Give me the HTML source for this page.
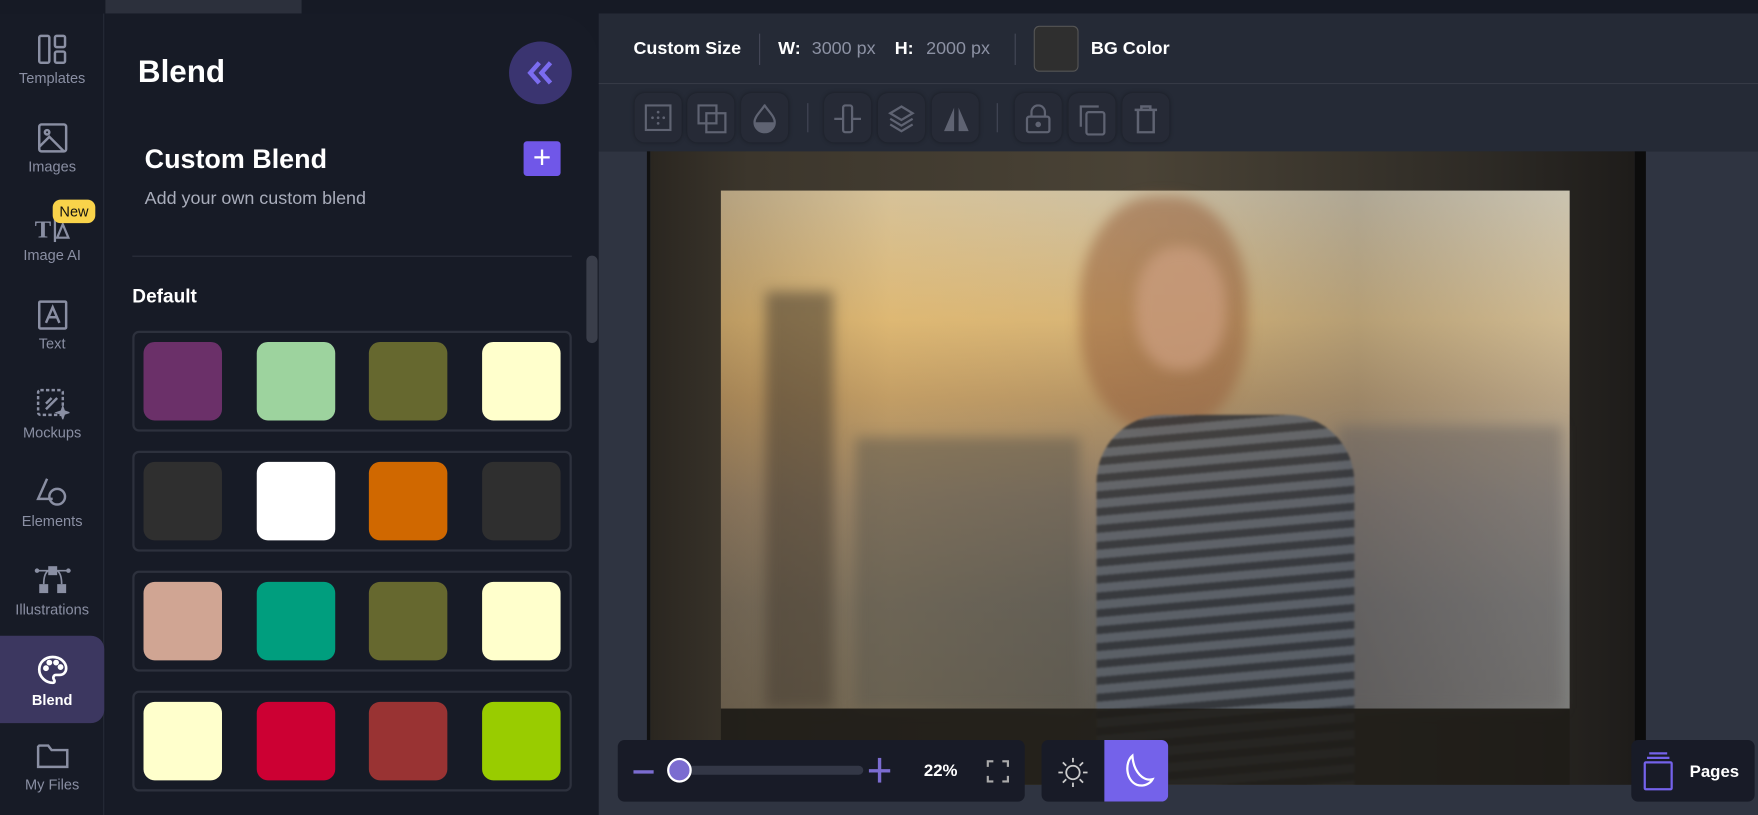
<!DOCTYPE html>
<html><head><meta charset="utf-8"><style>
*{box-sizing:border-box;margin:0;padding:0}
html,body{width:1758px;height:815px;overflow:hidden;background:#161a25;font-family:"Liberation Sans",sans-serif}
#w{width:1568px;height:727px;transform:scale(1.12117);transform-origin:0 0;position:relative;background:#161a25}
.a{position:absolute}
.side{left:0;top:12px;width:93px;height:715px;background:#171b26;border-right:1px solid #262a36}
.it{position:absolute;left:0;width:93px;text-align:center;color:#8a8fa3;font-size:13px}
.it svg{display:block;margin:0 auto 4px}
.panel{left:94px;top:12px;width:440px;height:715px;background:#171b26;border-top-right-radius:42px}
.sw{position:absolute;width:70px;height:70px;border-radius:10px}
.grp{position:absolute;left:118px;width:392px;height:90px;border:2px solid #2d313d;border-radius:6px}
.tb{position:absolute;top:83px;width:42px;height:44px;border-radius:9px;background:#262a36;box-shadow:0 0 4px rgba(0,0,0,.35)}
.tb svg{position:absolute;left:9px;top:10px}
.bl{filter:blur(6px)}
</style></head><body><div id="w">
<div class="a" style="left:94px;top:0;width:175px;height:12px;background:#2c303c"></div>
<div class="a side">
 <div class="it" style="top:18px"><svg width="28" height="28" viewBox="0 0 28 28" fill="none" stroke="#8a8fa3" stroke-width="2.2"><rect x="2" y="2" width="9" height="24" rx="1.5"/><rect x="16" y="2" width="9" height="10" rx="1.5"/><rect x="16" y="16" width="9" height="10" rx="1.5"/></svg>Templates</div>
 <div class="it" style="top:97px"><svg width="28" height="28" viewBox="0 0 28 28" fill="none" stroke="#8a8fa3" stroke-width="2.2"><rect x="2" y="2" width="24" height="24" rx="2"/><circle cx="9" cy="9" r="2"/><path d="M2 22l9-9 13 13"/></svg>Images</div>
 <div class="it" style="top:176px"><svg width="34" height="28" viewBox="0 0 34 28"><text x="1" y="24" font-family="Liberation Serif" font-weight="bold" font-size="22" fill="#8a8fa3">T</text><path d="M19 6v22M21 24l5-12 5 12z" stroke="#8a8fa3" stroke-width="2" fill="none"/></svg>Image AI</div>
 <div class="a" style="left:47px;top:166px;background:#f9d34a;color:#111;font-size:13px;padding:3px 6px;border-radius:7px">New</div>
 <div class="it" style="top:255px"><svg width="28" height="28" viewBox="0 0 28 28" fill="none" stroke="#8a8fa3" stroke-width="2.2"><rect x="2" y="2" width="24" height="24" rx="1"/><path d="M8 21l6-14 6 14M10 16h8"/></svg>Text</div>
 <div class="it" style="top:334px"><svg width="30" height="28" viewBox="0 0 30 28" fill="none" stroke="#8a8fa3" stroke-width="2.2"><rect x="2" y="2" width="22" height="22" rx="2" stroke-dasharray="3 2"/><path d="M9 14l5-5M9 19l10-10" /><path d="M24 18l1 3 3 1-3 1-1 3-1-3-3-1 3-1z" fill="#8a8fa3"/></svg>Mockups</div>
 <div class="it" style="top:413px"><svg width="30" height="28" viewBox="0 0 30 28" fill="none" stroke="#8a8fa3" stroke-width="2.2"><path d="M10 2L2 20h13"/><circle cx="19" cy="18" r="7"/></svg>Elements</div>
 <div class="it" style="top:492px"><svg width="34" height="28" viewBox="0 0 34 28" fill="#8a8fa3"><rect x="13" y="1" width="8" height="8"/><rect x="5" y="17" width="8" height="8"/><rect x="21" y="17" width="8" height="8"/><circle cx="3" cy="5" r="2"/><circle cx="31" cy="5" r="2"/><path d="M3 5h30M13 5c-3 2-4 6-4 12M21 5c3 2 4 6 4 12" stroke="#8a8fa3" stroke-width="1.5" fill="none"/></svg>Illustrations</div>
 <div class="a" style="left:0;top:555px;width:93px;height:78px;background:#3c3760;border-radius:0 12px 12px 0"></div>
 <div class="it" style="top:571px;color:#fff;font-weight:bold"><svg width="30" height="30" viewBox="0 0 30 30" fill="none" stroke="#fff" stroke-width="2.4"><path d="M15 3C8 3 3 8 3 14c0 7 6 12 12 12 2 0 2-2 1-3-1-2 0-4 2-4h3c4 0 6-3 6-6 0-5-5-10-12-10z"/><circle cx="9" cy="13" r="1.4" fill="#fff"/><circle cx="12" cy="8" r="1.4" fill="#fff"/><circle cx="18" cy="8" r="1.4" fill="#fff"/><circle cx="22" cy="12" r="1.4" fill="#fff"/></svg>Blend</div>
 <div class="it" style="top:650px"><svg width="30" height="26" viewBox="0 0 30 26" fill="none" stroke="#8a8fa3" stroke-width="2.2"><path d="M2 4v18h26V7H14l-3-4H3z"/></svg>My Files</div>
</div>
<div class="a panel"></div>
<div class="a" style="left:123px;top:48px;color:#fff;font-size:28px;font-weight:bold">Blend</div>
<div class="a" style="left:454px;top:37px;width:56px;height:56px;border-radius:50%;background:#3a3470"></div>
<svg class="a" style="left:469px;top:53px" width="26" height="24" viewBox="0 0 26 24" fill="none" stroke="#7b6cf0" stroke-width="4"><path d="M12 3L4 12l8 9M22 3l-8 9 8 9"/></svg>
<div class="a" style="left:129px;top:129px;color:#fff;font-size:24px;font-weight:bold">Custom Blend</div>
<div class="a" style="left:467px;top:126px;width:33px;height:31px;border-radius:3px;background:#7057e8;color:#fff;font-size:28px;line-height:29px;text-align:center">+</div>
<div class="a" style="left:129px;top:169px;color:#a9adbb;font-size:16px">Add your own custom blend</div>
<div class="a" style="left:118px;top:228px;width:392px;height:1px;background:#2d313d"></div>
<div class="a" style="left:118px;top:255px;color:#fff;font-size:17px;font-weight:bold">Default</div>
<div class="a" style="left:523px;top:228px;width:10px;height:78px;border-radius:5px;background:#3a3e4a"></div>
<div class="grp" style="top:295px"></div><div class="grp" style="top:402px"></div><div class="grp" style="top:509px"></div><div class="grp" style="top:616px"></div>
<div class="sw" style="left:128px;top:305px;background:#6b3069"></div><div class="sw" style="left:229px;top:305px;background:#9dd39e"></div><div class="sw" style="left:329px;top:305px;background:#66682f"></div><div class="sw" style="left:430px;top:305px;background:#ffffcc"></div>
<div class="sw" style="left:128px;top:412px;background:#2f2f2f"></div><div class="sw" style="left:229px;top:412px;background:#fff"></div><div class="sw" style="left:329px;top:412px;background:#d06800"></div><div class="sw" style="left:430px;top:412px;background:#2f2f2f"></div>
<div class="sw" style="left:128px;top:519px;background:#d0a593"></div><div class="sw" style="left:229px;top:519px;background:#009e7e"></div><div class="sw" style="left:329px;top:519px;background:#66682f"></div><div class="sw" style="left:430px;top:519px;background:#ffffcc"></div>
<div class="sw" style="left:128px;top:626px;background:#ffffcc"></div><div class="sw" style="left:229px;top:626px;background:#cc0033"></div><div class="sw" style="left:329px;top:626px;background:#993333"></div><div class="sw" style="left:430px;top:626px;background:#99cc00"></div>
<!-- right -->
<div class="a" style="left:534px;top:12px;width:1034px;height:123px;background:#252a36"></div>
<div class="a" style="left:534px;top:74px;width:1034px;height:1px;background:#363a46"></div>
<div class="a" style="left:565px;top:35px;color:#fff;font-size:16px;font-weight:bold">Custom Size</div>
<div class="a" style="left:677px;top:30px;width:1px;height:28px;background:#444857"></div>
<div class="a" style="left:694px;top:35px;color:#fff;font-size:16px;font-weight:bold">W:</div>
<div class="a" style="left:724px;top:35px;color:#8c91a3;font-size:16px">3000 px</div>
<div class="a" style="left:798px;top:35px;color:#fff;font-size:16px;font-weight:bold">H:</div>
<div class="a" style="left:826px;top:35px;color:#8c91a3;font-size:16px">2000 px</div>
<div class="a" style="left:905px;top:30px;width:1px;height:28px;background:#444857"></div>
<div class="a" style="left:922px;top:23px;width:40px;height:41px;border-radius:5px;background:#2f2f2f;border:1px solid #555"></div>
<div class="a" style="left:973px;top:35px;color:#fff;font-size:16px;font-weight:bold">BG Color</div>
<div class="tb" style="left:566px"><svg width="24" height="24" viewBox="0 0 24 24" fill="none" stroke="#5f6372" stroke-width="2"><rect x="1" y="1" width="22" height="22"/><g fill="#5f6372" stroke="none"><circle cx="12" cy="7" r="1.2"/><circle cx="7" cy="12" r="1.2"/><circle cx="12" cy="12" r="1.2"/><circle cx="17" cy="12" r="1.2"/><circle cx="12" cy="17" r="1.2"/></g></svg></div>
<div class="tb" style="left:613px"><svg width="26" height="26" viewBox="0 0 26 26" fill="none" stroke="#5f6372" stroke-width="2"><rect x="1" y="1" width="16" height="16"/><rect x="8" y="8" width="17" height="17"/></svg></div>
<div class="tb" style="left:661px"><svg width="24" height="26" viewBox="0 0 24 26" fill="#5f6372"><path d="M12 1C8 7 3 11 3 16a9 9 0 0018 0c0-5-5-9-9-15z" fill="none" stroke="#5f6372" stroke-width="2"/><path d="M3 16h18a9 9 0 01-18 0z"/></svg></div>
<div class="a" style="left:720px;top:92px;width:1px;height:26px;background:#444857"></div>
<div class="tb" style="left:735px"><svg width="24" height="26" viewBox="0 0 24 26" fill="none" stroke="#5f6372" stroke-width="2"><rect x="8" y="1" width="8" height="24" rx="2"/><path d="M0 13h8M16 13h8"/></svg></div>
<div class="tb" style="left:783px"><svg width="24" height="26" viewBox="0 0 24 26" fill="none" stroke="#5f6372" stroke-width="2"><path d="M12 2l10 6-10 6-10-6z"/><path d="M2 13l10 6 10-6M2 18l10 6 10-6"/></svg></div>
<div class="tb" style="left:831px"><svg width="26" height="26" viewBox="0 0 26 26" fill="#5f6372"><path d="M11 3L2 24h9zM15 3l9 21h-9z"/></svg></div>
<div class="a" style="left:889px;top:92px;width:1px;height:26px;background:#444857"></div>
<div class="tb" style="left:905px"><svg width="24" height="26" viewBox="0 0 24 26" fill="none" stroke="#5f6372" stroke-width="2"><rect x="2" y="11" width="20" height="14" rx="2"/><path d="M6 11V7a6 6 0 0112 0v4"/><circle cx="12" cy="18" r="1.5" fill="#5f6372"/></svg></div>
<div class="tb" style="left:953px"><svg width="26" height="28" viewBox="0 0 26 28" fill="none" stroke="#5f6372" stroke-width="2"><path d="M2 20V2h16"/><rect x="7" y="7" width="16" height="20" rx="2"/></svg></div>
<div class="tb" style="left:1001px"><svg width="24" height="26" viewBox="0 0 24 26" fill="none" stroke="#5f6372" stroke-width="2.2"><path d="M2 5h20M8 5V2h8v3M5 5v20h14V5"/></svg></div>
<div class="a" style="left:534px;top:135px;width:1034px;height:592px;background:#2f3441"></div>
<!-- photo -->
<div class="a" style="left:577px;top:135px;width:891px;height:565px;overflow:hidden;background:linear-gradient(90deg,#2a2620,#3c362c 10%,#4a4336 50%,#2d2a25 85%,#1e1c1a);border-left:3px solid #111;border-right:10px solid #0c0c0c">
 <div class="a" style="left:63px;top:35px;width:757px;height:462px;background:linear-gradient(180deg,#cfc1a2 0%,#d8b576 25%,#b89665 40%,#8a7a68 60%,#6a665f 80%,#615d55 100%)"></div>
 <div class="a" style="left:63px;top:35px;width:757px;height:462px;background:linear-gradient(90deg,rgba(120,90,50,.3),rgba(255,200,100,.15) 20%,rgba(0,0,0,0) 45%,rgba(80,90,110,.25) 75%,rgba(190,200,210,.3))"></div>
 <div class="a bl" style="left:103px;top:125px;width:60px;height:372px;background:rgba(70,60,50,.55)"></div>
 <div class="a bl" style="left:183px;top:255px;width:200px;height:242px;background:rgba(90,85,75,.5)"></div>
 <div class="a bl" style="left:613px;top:245px;width:200px;height:252px;background:rgba(100,95,95,.45)"></div>
 <div class="a bl" style="left:383px;top:40px;width:150px;height:210px;border-radius:45%;background:rgba(150,95,60,.55)"></div>
 <div class="a bl" style="left:433px;top:85px;width:80px;height:110px;border-radius:45%;background:rgba(205,160,130,.7)"></div>
 <div class="a" style="left:398px;top:235px;width:230px;height:330px;border-radius:60px 60px 0 0;background:repeating-linear-gradient(175deg,#59606a 0 8px,#2b2f36 8px 15px);opacity:.8;filter:blur(1px)"></div>
 <div class="a" style="left:63px;top:497px;width:757px;height:68px;background:rgba(30,28,24,.85)"></div>
</div>
<!-- bottom -->
<div class="a" style="left:551px;top:660px;width:363px;height:55px;border-radius:6px;background:#181b27"></div>
<div class="a" style="left:565px;top:687px;width:18px;height:3px;background:#7b6cd0"></div>
<div class="a" style="left:595px;top:683px;width:175px;height:8px;border-radius:4px;background:#333746"></div>
<div class="a" style="left:595px;top:676px;width:22px;height:22px;border-radius:50%;background:#7b6cd0;border:2px solid #fff"></div>
<div class="a" style="left:783px;top:676px;width:3px;height:22px;background:#7b6cd0"></div><div class="a" style="left:775px;top:686px;width:19px;height:3px;background:#7b6cd0"></div>
<div class="a" style="left:824px;top:679px;color:#fff;font-size:15px;font-weight:bold">22%</div>
<svg class="a" style="left:880px;top:678px" width="20" height="20" viewBox="0 0 20 20" fill="none" stroke="#aaa" stroke-width="2"><path d="M1 6V1h5M14 1h5v5M19 14v5h-5M6 19H1v-5"/></svg>
<div class="a" style="left:929px;top:660px;width:113px;height:55px;border-radius:6px;background:#181b27;overflow:hidden"><div class="a" style="left:56px;top:0;width:57px;height:55px;background:#7462ea"></div></div>
<svg class="a" style="left:943px;top:675px" width="28" height="28" viewBox="0 0 28 28" fill="none" stroke="#ccc" stroke-width="1.6"><circle cx="14" cy="14" r="6"/><path d="M14 1v4M14 23v4M1 14h4M23 14h4M5 5l3 3M20 20l3 3M5 23l3-3M20 8l3-3"/></svg>
<svg class="a" style="left:998px;top:672px" width="32" height="32" viewBox="0 0 32 32" fill="none" stroke="#fff" stroke-width="2"><path d="M12 2C5 8 6 24 16 28c6 2 12-1 14-5-8 2-17-6-18-21z"/></svg>
<div class="a" style="left:1455px;top:660px;width:110px;height:55px;border-radius:6px;background:#181b27"></div>
<svg class="a" style="left:1464px;top:670px" width="30" height="36" viewBox="0 0 30 36" fill="none" stroke="#7462ea" stroke-width="2"><path d="M7 2h16M5 6h20"/><rect x="3" y="10" width="24" height="24" rx="1"/></svg>
<div class="a" style="left:1507px;top:680px;color:#fff;font-size:15px;font-weight:bold">Pages</div>
</div></body></html>
